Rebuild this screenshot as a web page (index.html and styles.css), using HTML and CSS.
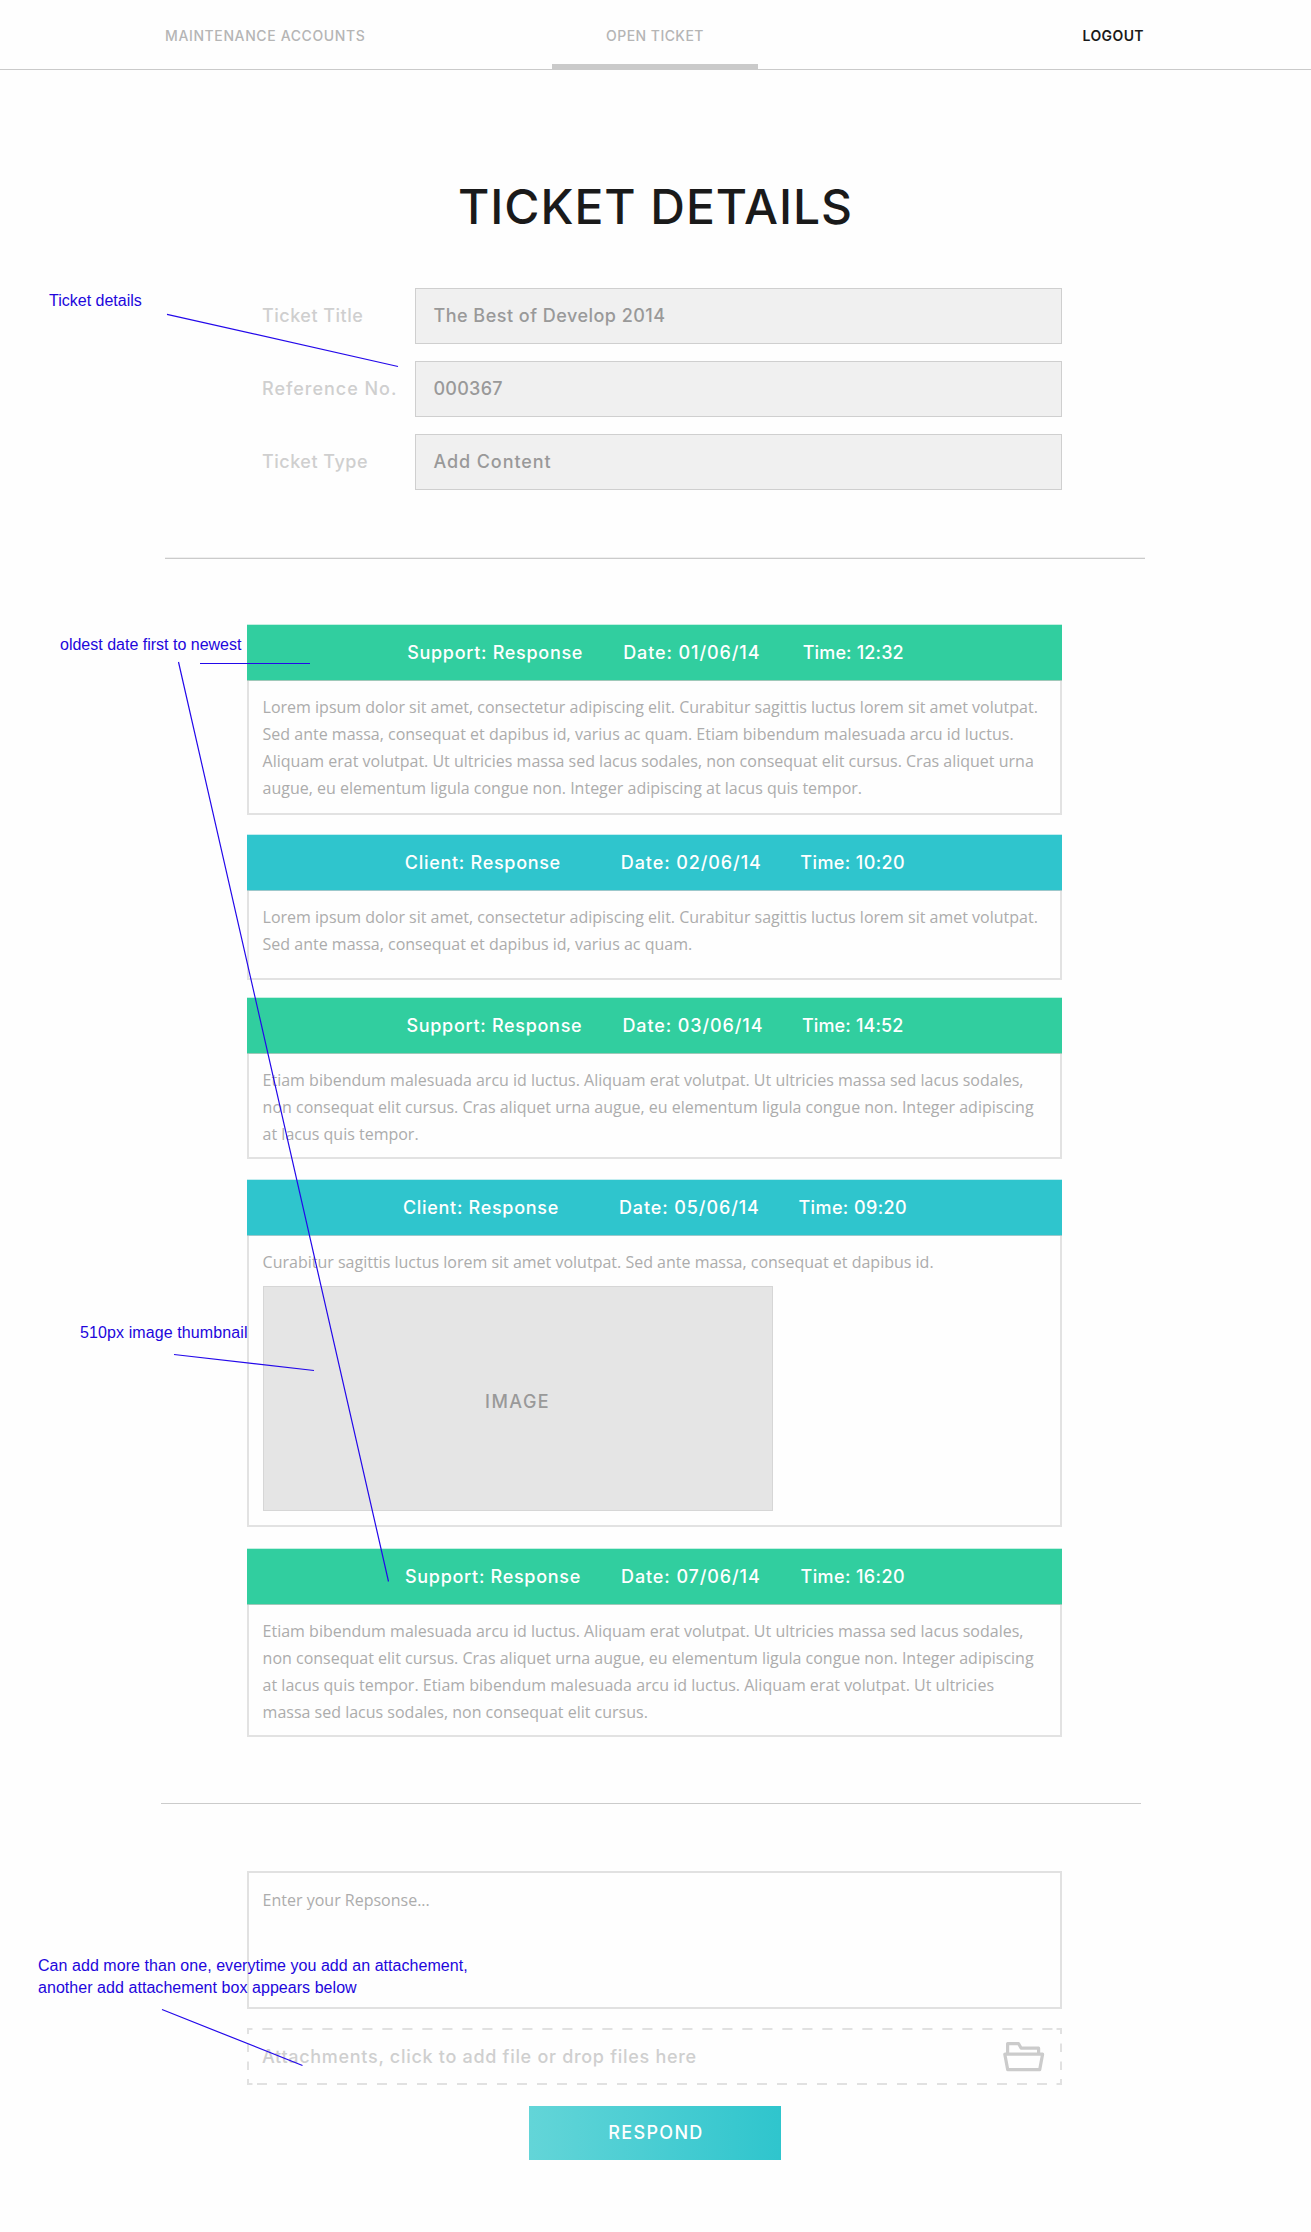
FILE: index.html
```html
<!DOCTYPE html>
<html lang="en">
<head>
<meta charset="utf-8">
<title>Ticket Details</title>
<link rel="stylesheet" href="styles.css">
</head>
<body>
<header class="topbar">
  <nav class="nav">
    <a class="nav-link">MAINTENANCE ACCOUNTS</a>
    <a class="nav-link nav-current">OPEN TICKET</a>
    <a class="nav-link nav-logout">LOGOUT</a>
  </nav>
</header>

<main class="page">
  <h1 class="title">TICKET DETAILS</h1>

  <dl class="fields">
    <div class="field"><dt class="label">Ticket Title</dt><dd class="value value-title">The Best of Develop 2014</dd></div>
    <div class="field"><dt class="label label-ref">Reference No.</dt><dd class="value value-ref">000367</dd></div>
    <div class="field"><dt class="label">Ticket Type</dt><dd class="value">Add Content</dd></div>
  </dl>

  <hr class="rule">

  <section class="thread">
    <article class="card card-1">
      <h2 class="card-head support"><span class="who">Support: Response</span><span class="date">Date: 01/06/14</span><span class="time time-tight">Time: 12:32</span></h2>
      <div class="card-body">
        <p class="text">Lorem ipsum dolor sit amet, consectetur adipiscing elit. Curabitur sagittis luctus lorem sit amet volutpat.<br>Sed ante massa, consequat et dapibus id, varius ac quam. Etiam bibendum malesuada arcu id luctus.<br>Aliquam erat volutpat. Ut ultricies massa sed lacus sodales, non consequat elit cursus. Cras aliquet urna<br>augue, eu elementum ligula congue non. Integer adipiscing at lacus quis tempor.</p>
      </div>
    </article>
    <article class="card card-2">
      <h2 class="card-head client"><span class="who">Client: Response</span><span class="date">Date: 02/06/14</span><span class="time">Time: 10:20</span></h2>
      <div class="card-body">
        <p class="text">Lorem ipsum dolor sit amet, consectetur adipiscing elit. Curabitur sagittis luctus lorem sit amet volutpat.<br>Sed ante massa, consequat et dapibus id, varius ac quam.</p>
      </div>
    </article>
    <article class="card card-3">
      <h2 class="card-head support"><span class="who">Support: Response</span><span class="date">Date: 03/06/14</span><span class="time time-tight">Time: 14:52</span></h2>
      <div class="card-body">
        <p class="text">Etiam bibendum malesuada arcu id luctus. Aliquam erat volutpat. Ut ultricies massa sed lacus sodales,<br>non consequat elit cursus. Cras aliquet urna augue, eu elementum ligula congue non. Integer adipiscing<br>at lacus quis tempor.</p>
      </div>
    </article>
    <article class="card card-4">
      <h2 class="card-head client"><span class="who">Client: Response</span><span class="date">Date: 05/06/14</span><span class="time">Time: 09:20</span></h2>
      <div class="card-body">
        <p class="text">Curabitur sagittis luctus lorem sit amet volutpat. Sed ante massa, consequat et dapibus id.</p>
        <div class="thumb">IMAGE</div>
      </div>
    </article>
    <article class="card card-5">
      <h2 class="card-head support"><span class="who">Support: Response</span><span class="date">Date: 07/06/14</span><span class="time">Time: 16:20</span></h2>
      <div class="card-body">
        <p class="text">Etiam bibendum malesuada arcu id luctus. Aliquam erat volutpat. Ut ultricies massa sed lacus sodales,<br>non consequat elit cursus. Cras aliquet urna augue, eu elementum ligula congue non. Integer adipiscing<br>at lacus quis tempor. Etiam bibendum malesuada arcu id luctus. Aliquam erat volutpat. Ut ultricies<br>massa sed lacus sodales, non consequat elit cursus.</p>
      </div>
    </article>
  </section>

  <hr class="rule rule-reply">

  <section class="reply">
    <div class="response">Enter your Repsonse...</div>
    <div class="drop">
      <svg class="drop-outline" width="815" height="57" viewBox="0 0 815 57" fill="none" stroke="#e1e1e1" stroke-width="2">
        <path d="M0 1H5.5M809.5 1H815M0 56H5.5M809.5 56H815"/>
        <path d="M15.3 1H806" stroke-dasharray="10.2 9.8"/>
        <path d="M10 56H800" stroke-dasharray="10 10"/>
        <path d="M1 0V6M1 51V57M814 0V6M814 51V57M1 15.5V24M1 33.5V42M814 15.5V24M814 33.5V42"/>
      </svg>
      <span>Attachments, click to add file or drop files here</span>
      <svg class="folder" width="42" height="30" viewBox="0 0 42 30" fill="none" stroke="#cbcbcb" stroke-width="3.2" stroke-linejoin="round">
        <path d="M4.6 11V1.7H15.6L18.2 6.2H35.6V11"/>
        <path d="M1.8 12.2H39.6L36.7 27.6H4.7Z"/>
      </svg>
    </div>
    <button class="submit" type="button">RESPOND</button>
  </section>
</main>

<aside class="notes">
  <svg class="leaders" width="1311" height="2232" viewBox="0 0 1311 2232" fill="none" stroke="#2308ea" stroke-width="1.2">
    <path d="M167 314.3L398 366.5M200 663.5H310M178.5 662L388.5 1581.5M174 1354.5L314 1370.5M162 2009.5L302.5 2065.5"/>
  </svg>
  <p class="note note-details">Ticket details</p>
  <p class="note note-order">oldest date first to newest</p>
  <p class="note note-thumb">510px image thumbnail</p>
  <p class="note note-attach">Can add more than one, everytime you add an attachement,<br>another add attachement box appears below</p>
</aside>
</body>
</html>
```
FILE: styles.css
```css
* { box-sizing: border-box; }

body {
  position: relative;
  margin: 0;
  height: 2232px;
  background: #fefefe;
  font-family: Inter, "Liberation Sans", sans-serif;
  font-weight: 500;
  font-size: 18px;
}

h1, h2, p, dl, dd { margin: 0; }

.topbar {
  height: 70px;
  border-bottom: 1px solid #cacaca;
}

.nav {
  display: grid;
  grid-template-columns: 1fr 206px 1fr;
  width: 980px;
  height: 70px;
  margin-left: 165px;
}

.nav-link {
  height: 70px;
  padding-top: 26px;
  font-size: 14px;
  line-height: 20px;
  letter-spacing: 0.62px;
  color: #b5b5b5;
}

.nav-current {
  letter-spacing: 0.45px;
  text-align: center;
  border-bottom: 6px solid #cacaca;
}

.nav-logout {
  padding-right: 1px;
  font-weight: 600;
  letter-spacing: 0.4px;
  text-align: right;
  color: #1a1a1a;
}

.page {
  width: 980px;
  margin-left: 165px;
}

.title {
  margin-top: 107px;
  padding-left: 1px;
  font-size: 48px;
  font-weight: 500;
  line-height: 60px;
  letter-spacing: 0.95px;
  text-align: center;
  color: #1a1a1a;
}

.fields {
  display: grid;
  gap: 17px;
  width: 815px;
  margin: 51px 0 67px 82px;
}

.field {
  display: grid;
  grid-template-columns: 167.5px 1fr;
  line-height: 54px;
}

.label {
  padding: 1px 0 1px 15px;
  letter-spacing: 0.5px;
  color: #cfcfcf;
}

.label-ref { letter-spacing: 0.98px; }

.value {
  padding-left: 18px;
  letter-spacing: 0.9px;
  color: #999;
  background: #f0f0f0;
  border: 1px solid #cfcfcf;
}

.value-title { letter-spacing: 0.48px; }
.value-ref { letter-spacing: 0.25px; }

.rule {
  height: 2px;
  margin: 0;
  border: solid #cbcbcb;
  border-width: 0 0 1px;
  background: #efefef;
}

.thread {
  width: 815px;
  margin: 65px 0 66px 82px;
}

.card {
  display: flex;
  flex-direction: column;
}

.card-1 { height: 191px; margin-bottom: 19px; }
.card-2 { height: 146px; margin-bottom: 17px; }
.card-3 { height: 162px; margin-bottom: 20px; }
.card-4 { height: 348px; margin-bottom: 21px; }
.card-5 { height: 189px; }

.card-head {
  display: grid;
  grid-template-columns: 216px 179.5px auto;
  justify-content: center;
  flex: none;
  padding-left: 1px;
  font-size: 18px;
  font-weight: 500;
  line-height: 55px;
  color: #fff;
}

.card-1 .card-head { padding-left: 2px; }

.support {
  background: #31ce9f;
  border-top: 1px solid #c3f0e1;
  border-bottom: 1px solid #9fc9b9;
}

.client {
  background: #2fc5cd;
  border-top: 1px solid #c2edf0;
  border-bottom: 1px solid #9cc8cb;
}

.who { letter-spacing: 0.7px; }
.date { letter-spacing: 0.9px; }
.time { letter-spacing: 0.4px; }
.time-tight { letter-spacing: 0.15px; }

.card-body {
  flex: 1;
  padding: 13px 0 0 13.6px;
  border: 2px solid #e2e2e2;
  border-top: 0;
}

.text, .response {
  font-family: "Open Sans", "Noto Sans", sans-serif;
  font-size: 16px;
  font-weight: 400;
  line-height: 27px;
  white-space: nowrap;
  color: #acacac;
}

.thumb {
  width: 510px;
  height: 225px;
  margin-top: 10px;
  border: 1px solid #d6d6d6;
  background: #e5e5e5;
  line-height: 230px;
  letter-spacing: 1.45px;
  text-align: center;
  color: #999;
}

.rule-reply {
  height: 1px;
  margin-left: -4px;
  margin-right: 4px;
}

.reply {
  display: flex;
  flex-direction: column;
  width: 815px;
  margin: 67px 0 0 82px;
}

.response {
  height: 138px;
  padding: 14px 13.6px;
  border: 2px solid #e1e1e1;
}

.drop {
  position: relative;
  display: flex;
  justify-content: space-between;
  height: 57px;
  margin-top: 19px;
  padding: 0 17px 0 15px;
  line-height: 57px;
  letter-spacing: 0.7px;
  color: #cfcfcf;
}

.drop-outline {
  position: absolute;
  inset: 0;
}

.folder { margin-top: 14px; }

.submit {
  width: 252px;
  height: 54px;
  margin: 21px 0 0 282px;
  padding: 0 0 0 2px;
  border: 0;
  background: linear-gradient(90deg, #63d5d8, #2fc5cd);
  font: inherit;
  line-height: 54px;
  letter-spacing: 1.33px;
  color: #fff;
}

.notes, .leaders {
  position: absolute;
  top: 0;
  left: 0;
}

.note {
  position: absolute;
  font: 400 16px/22px "Liberation Sans", sans-serif;
  white-space: nowrap;
  color: #2206dc;
}

.note-details { left: 49px; top: 290px; }
.note-order { left: 60px; top: 634px; }
.note-thumb { left: 80px; top: 1322px; letter-spacing: 0.1px; }
.note-attach { left: 38px; top: 1955px; letter-spacing: 0.05px; }
```
